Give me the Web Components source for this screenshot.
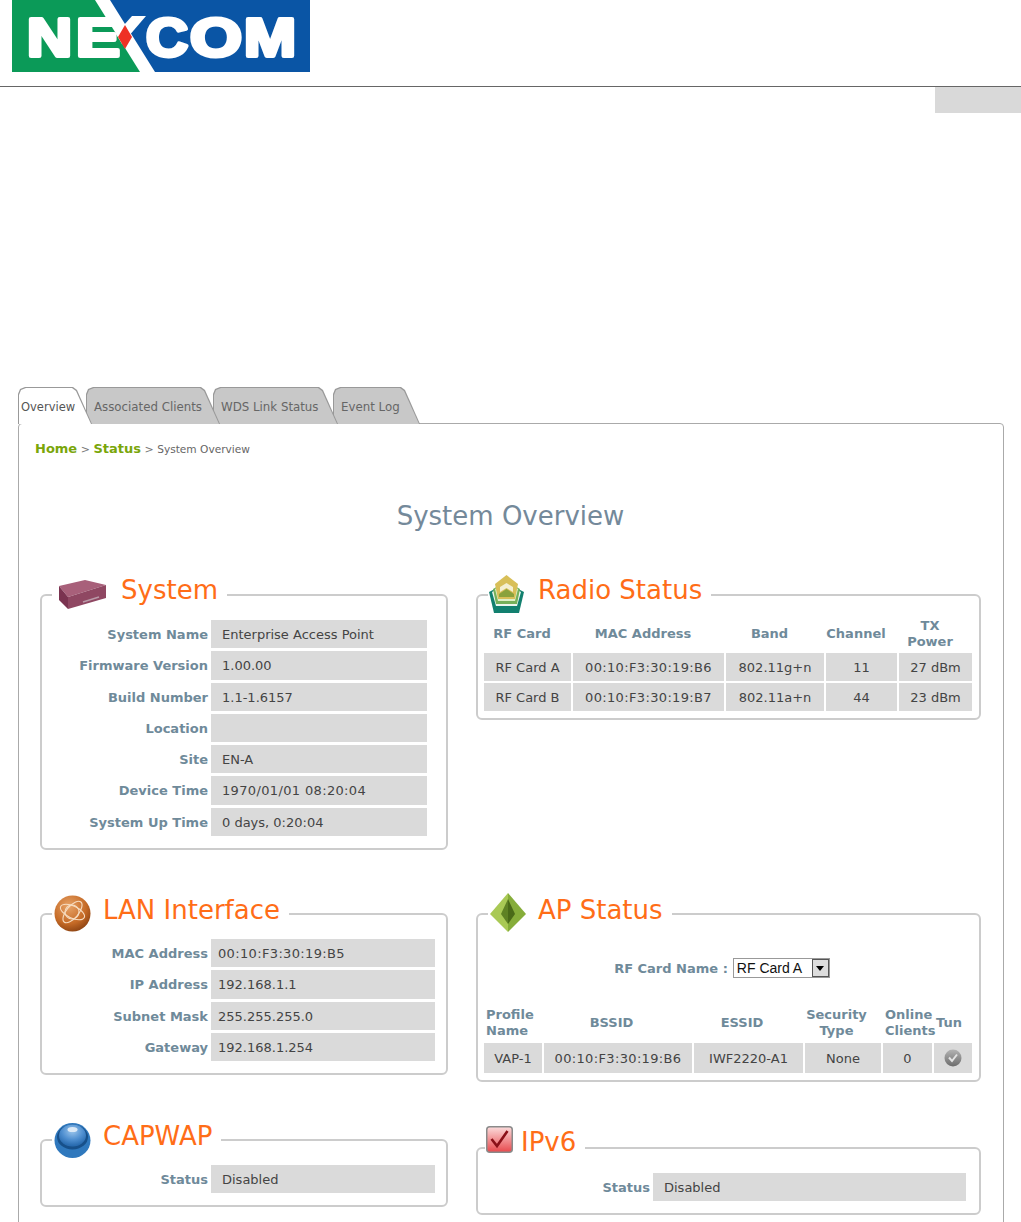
<!DOCTYPE html>
<html>
<head>
<meta charset="utf-8">
<title>System Overview</title>
<style>
html, body { margin: 0; padding: 0; background: #fff; overflow: hidden; height: 1222px; }
body { font-family: "DejaVu Sans", Verdana, sans-serif; }
nx-tabs { margin: 274px 0 -1px 18px; }
</style>
</head>
<body>

<nx-header></nx-header>

<nx-tabs>
  <nx-tab active style="width:74px;z-index:4">Overview</nx-tab>
  <nx-tab style="width:134px;margin-left:-6px;z-index:3">Associated Clients</nx-tab>
  <nx-tab style="width:125px;margin-left:-7px;z-index:2">WDS Link Status</nx-tab>
  <nx-tab style="width:87px;margin-left:-5px;z-index:1">Event Log</nx-tab>
</nx-tabs>

<nx-page>
  <nx-crumbs><a>Home</a> &gt; <a>Status</a> &gt; <small>System Overview</small></nx-crumbs>
  <nx-title>System Overview</nx-title>

  <nx-columns>
    <status-panel heading="System" style="--gap:13px;--ty:0px">
      <svg slot="icon" width="52" height="29" viewBox="0 0 52 29" style="margin:5px 0 0 4px">
        <path d="M3 6 L29 0 L50 5 L12 17Z" fill="#a8607a"/>
        <path d="M3 6 L12 17 L12 29 L3 20Z" fill="#7a3350"/>
        <path d="M12 17 L50 5 L50 18 L12 29Z" fill="#8f4762"/>
        <path d="M27 22 L43 17" stroke="#b99aa8" stroke-width="1.5"/>
      </svg>
      <kv-list style="--label-w:166px;--value-w:216px">
        <kv-row label="System Name">Enterprise Access Point</kv-row>
        <kv-row label="Firmware Version">1.00.00</kv-row>
        <kv-row label="Build Number">1.1-1.6157</kv-row>
        <kv-row label="Location"></kv-row>
        <kv-row label="Site">EN-A</kv-row>
        <kv-row label="Device Time" num>1970/01/01 08:20:04</kv-row>
        <kv-row label="System Up Time">0 days, 0:20:04</kv-row>
      </kv-list>
    </status-panel>

    <status-panel heading="Radio Status" style="--ty:0px;--pad-top:2px;--pad-bottom:7px">
      <svg slot="icon" width="38" height="39" viewBox="0 0 38 39" style="margin-top:0">
        <path d="M18.5 8 L36 17 L31 38 L6 38 L1 17Z" fill="#12806f"/>
        <path d="M18.5 9 L33 17 L29 31 L8 31 L4 17Z" fill="#eef6ee"/>
        <path d="M18.5 6 L32 14 L29 29 L8 29 L5 14Z" fill="#76b05a"/>
        <path d="M18.5 7 L30 14 L27 26 L10 26 L7 14Z" fill="#dff0c8"/>
        <path d="M18.5 0 L30 9 L27 24 L10 24 L7 9Z" fill="#d8bf58"/>
        <path d="M18.5 8 L25 12 L25 17 L18.5 13 L12 17 L12 12Z" fill="#f4efd0"/>
        <path d="M11 19 L18.5 14 L26 19 L26 22 L11 22Z" fill="#8aa23c"/>
      </svg>
      <data-table columns="87px 151px 98px 71px 73px" style="--head-h:34px;--cell-h:28px;--row-gap:2px;--head-shift:11px">
        <t-head>RF Card</t-head><t-head>MAC Address</t-head><t-head>Band</t-head><t-head>Channel</t-head><t-head>TX<br>Power</t-head>
        <t-cell>RF Card A</t-cell><t-cell num>00:10:F3:30:19:B6</t-cell><t-cell>802.11g+n</t-cell><t-cell>11</t-cell><t-cell>27 dBm</t-cell>
        <t-cell>RF Card B</t-cell><t-cell num>00:10:F3:30:19:B7</t-cell><t-cell>802.11a+n</t-cell><t-cell>44</t-cell><t-cell>23 dBm</t-cell>
      </data-table>
    </status-panel>

    <status-panel heading="LAN Interface">
      <svg slot="icon" width="37" height="37" viewBox="0 0 37 37" style="margin:1px 0 0 2px">
        <defs><radialGradient id="lanBall" cx=".4" cy=".3" r=".8"><stop offset="0" stop-color="#e8a468"/><stop offset=".6" stop-color="#c56a26"/><stop offset="1" stop-color="#7f3a0e"/></radialGradient></defs>
        <circle cx="18.5" cy="18.5" r="18" fill="url(#lanBall)"/>
        <g fill="none" stroke="#f6dcc0" stroke-width="1.1">
          <ellipse cx="18.5" cy="17" rx="13" ry="6" transform="rotate(25 18.5 17)"/>
          <ellipse cx="18.5" cy="17" rx="13" ry="6" transform="rotate(-50 18.5 17)"/>
          <circle cx="18" cy="17" r="7"/>
        </g>
      </svg>
      <kv-list style="--label-w:166px;--value-w:224px">
        <kv-row label="MAC Address" narrow num>00:10:F3:30:19:B5</kv-row>
        <kv-row label="IP Address" narrow>192.168.1.1</kv-row>
        <kv-row label="Subnet Mask" narrow>255.255.255.0</kv-row>
        <kv-row label="Gateway" narrow>192.168.1.254</kv-row>
      </kv-list>
    </status-panel>

    <status-panel heading="AP Status" style="--gap:11px;--pad-bottom:7px">
      <svg slot="icon" width="38" height="39" viewBox="0 0 38 39" style="margin:-1px 0 0 1px">
        <path d="M19 0 L37 21 L19 39Z" fill="#86ad3a"/>
        <path d="M19 0 L1 21 L19 39Z" fill="#a9c955"/>
        <path d="M19 6 L26 21 L19 31Z" fill="#4a6a18"/>
        <path d="M19 6 L12 21 L19 31Z" fill="#5f8224"/>
      </svg>
      <rf-picker>RF Card A</rf-picker>
      <data-table columns="58px 148px 109px 76px 49px 38px" style="--head-h:37px;--cell-h:30px;--row-gap:0px;--head-shift:13px;--head-pb:3px">
        <t-head left>Profile<br>Name</t-head><t-head>BSSID</t-head><t-head>ESSID</t-head><t-head>Security<br>Type</t-head><t-head left>Online<br>Clients</t-head><t-head left>Tun</t-head>
        <t-cell>VAP-1</t-cell><t-cell num>00:10:F3:30:19:B6</t-cell><t-cell>IWF2220-A1</t-cell><t-cell>None</t-cell><t-cell>0</t-cell>
        <t-cell>
          <svg width="18" height="18" viewBox="0 0 18 18">
            <defs><linearGradient id="tunBall" x1="0" y1="0" x2="0" y2="1"><stop offset="0" stop-color="#b4b4b4"/><stop offset="1" stop-color="#6c6c6c"/></linearGradient></defs>
            <circle cx="9" cy="9" r="8.5" fill="url(#tunBall)"/>
            <path d="M5 8.5 L8 12 L13 5.5" fill="none" stroke="#e4e4e4" stroke-width="2"/>
          </svg>
        </t-cell>
      </data-table>
    </status-panel>

    <status-panel heading="CAPWAP">
      <svg slot="icon" width="37" height="35" viewBox="0 0 37 35" style="margin:3px 0 0 2px">
        <defs><radialGradient id="capBall" cx=".5" cy=".3" r=".65"><stop offset="0" stop-color="#9cc6ec"/><stop offset=".6" stop-color="#4f8fd0"/><stop offset="1" stop-color="#2a6cb0"/></radialGradient></defs>
        <ellipse cx="18.5" cy="17.5" rx="18" ry="17.5" fill="#2f78bd"/>
        <ellipse cx="18.5" cy="14" rx="15.5" ry="12.5" fill="#17508a"/>
        <ellipse cx="18.5" cy="12.5" rx="13.5" ry="11" fill="url(#capBall)"/>
        <ellipse cx="18.5" cy="6.5" rx="5" ry="2.6" fill="#dbe9f6"/>
      </svg>
      <kv-list style="--label-w:166px;--value-w:224px">
        <kv-row label="Status">Disabled</kv-row>
      </kv-list>
    </status-panel>

    <status-panel heading="IPv6" style="margin-top:8px;--ty:-1px;--gap:8px;--legend-left:7px">
      <svg slot="icon" width="27" height="27" viewBox="0 0 27 27" style="margin:-2px 0 0 1px">
        <defs><linearGradient id="v6Box" x1="0" y1="0" x2="0" y2="1"><stop offset="0" stop-color="#fbdcdc"/><stop offset="1" stop-color="#e8484c"/></linearGradient></defs>
        <rect x=".75" y=".75" width="25.5" height="25.5" rx="3" fill="url(#v6Box)" stroke="#8a8a8a" stroke-width="1.5"/>
        <path d="M5.5 13 L11 20 L21.5 5" fill="none" stroke="#8a1018" stroke-width="2.6"/>
      </svg>
      <kv-list style="--label-w:172px;--value-w:313px">
        <kv-row label="Status">Disabled</kv-row>
      </kv-list>
    </status-panel>
  </nx-columns>
</nx-page>

<script>
function shadow(el, markup) {
  el.attachShadow({mode: "open"}).innerHTML = markup;
}

customElements.define("nx-header", class extends HTMLElement {
  constructor() {
    super();
    shadow(this, `
<style>
:host { display: block; }
.logo { display: block; margin-left: 12px; height: 72px; }
.rule { border-bottom: 1px solid #666; height: 14px; }
.tail { display: flex; justify-content: flex-end; }
.tail div { width: 86px; height: 26px; background: #d9d9d9; }
text { font-family: "Liberation Sans", Arial, sans-serif; font-weight: bold; fill: #fff; stroke: #fff; stroke-width: 4px; stroke-linejoin: round; font-size: 54px; }
</style>
<svg class="logo" width="298" height="72" viewBox="0 0 298 72">
  <rect width="298" height="72" fill="#0a55a5"/>
  <path d="M0 0 H86 L131 72 H0Z" fill="#0b9a58"/>
  <text x="15" y="56" textLength="45" lengthAdjust="spacingAndGlyphs">N</text>
  <text x="64" y="56" textLength="44" lengthAdjust="spacingAndGlyphs">E</text>
  <path d="M83 0 H98 L143 72 H128Z" fill="#fff"/>
  <path d="M120 16 H134 L110 44 L104 34Z" fill="#fff"/>
  <path d="M113 25 L120 37 L113 49 L106 37Z" fill="#ee3124"/>
  <text x="134" y="56" textLength="42" lengthAdjust="spacingAndGlyphs">C</text>
  <text x="178" y="56" textLength="52" lengthAdjust="spacingAndGlyphs">O</text>
  <text x="232" y="56" textLength="52" lengthAdjust="spacingAndGlyphs">M</text>
</svg>
<div class="rule"></div>
<div class="tail"><div></div></div>`);
  }
});

customElements.define("nx-tabs", class extends HTMLElement {
  constructor() {
    super();
    shadow(this, `
<style>
:host { display: flex; position: relative; z-index: 1; }
</style>
<slot></slot>`);
  }
});

customElements.define("nx-tab", class extends HTMLElement {
  constructor() {
    super();
    shadow(this, `
<style>
:host {
  display: block; position: relative; height: 37px; box-sizing: border-box;
  font-size: 11.8px; color: #666;
  --shape: polygon(0 7px, 2px 2px, 7px 0, calc(100% - 19px) 0, calc(100% - 15px) 3px, 100% 100%, 0 100%);
}
.edge { height: 100%; padding: 1px 1px 0 1px; box-sizing: border-box; background: #999; clip-path: var(--shape); }
.fill { height: 100%; background: #c8c8c8; clip-path: var(--shape); display: flex; align-items: center; padding-left: 7px; padding-top: 1px; box-sizing: border-box; white-space: nowrap; }
:host([active]) .fill { background: #fff; padding-left: 2px; }
:host([active]) { color: #555; font-size: 11.5px; }
</style>
<div class="edge"><div class="fill"><slot></slot></div></div>`);
  }
});

customElements.define("nx-page", class extends HTMLElement {
  constructor() {
    super();
    shadow(this, `
<style>
:host {
  display: block; margin-left: 18px; width: 986px; box-sizing: border-box;
  border: 1px solid #aaa; border-radius: 4px 4px 0 0; padding: 0 0 40px 21px;
}
</style>
<slot></slot>`);
  }
});

customElements.define("nx-crumbs", class extends HTMLElement {
  constructor() {
    super();
    shadow(this, `
<style>
:host { display: block; padding-top: 17px; height: 32px; line-height: 16px; margin-left: -5px; font-size: 11px; color: #777; box-sizing: border-box; white-space: nowrap; }
::slotted(a) { color: #7aa60a; font-weight: bold; font-size: 13px; }
::slotted(small) { font-size: 10.6px; color: #666; }
</style>
<slot></slot>`);
  }
});

customElements.define("nx-title", class extends HTMLElement {
  constructor() {
    super();
    shadow(this, `
<style>
:host { display: block; margin: 44px 0 43px -22px; height: 32px; line-height: 32px; text-align: center; font-size: 26px; color: #74899a; }
</style>
<slot></slot>`);
  }
});

customElements.define("nx-columns", class extends HTMLElement {
  constructor() {
    super();
    shadow(this, `
<style>
:host { display: grid; grid-template-columns: 408px 505px; grid-template-rows: 319px 226px auto; column-gap: 28px; align-items: start; }
</style>
<slot></slot>`);
  }
});

customElements.define("status-panel", class extends HTMLElement {
  constructor() {
    super();
    shadow(this, `
<style>
:host { display: block; }
fieldset { margin: 0; padding: var(--pad-top, 5px) 0 var(--pad-bottom, 12px) 0; border: 2px solid #ccc; border-radius: 6px; min-width: 0; }
legend {
  display: flex; height: 40px; padding: 0 9px 0 0; margin-left: var(--legend-left, 10px);
  background: #fff; box-sizing: border-box;
}
h2 {
  margin: var(--ty, 1px) 0 0 var(--gap, 12px); font: normal 26px/30px "DejaVu Sans", Verdana, sans-serif; color: #ff6d17; white-space: nowrap;
}
::slotted(svg) { flex: none; }
</style>
<fieldset>
  <legend><slot name="icon"></slot><h2></h2></legend>
  <slot></slot>
</fieldset>`);
  }
  connectedCallback() {
    this.shadowRoot.querySelector("h2").textContent = this.getAttribute("heading");
  }
});

customElements.define("kv-list", class extends HTMLElement {
  constructor() {
    super();
    shadow(this, `
<style>
:host { display: grid; grid-auto-rows: 28.3px; row-gap: 3px; }
</style>
<slot></slot>`);
  }
});

customElements.define("kv-row", class extends HTMLElement {
  constructor() {
    super();
    shadow(this, `
<style>
:host { display: grid; grid-template-columns: var(--label-w) var(--value-w); column-gap: 3px; font-size: 13px; line-height: 29px; }
.label { text-align: right; font-weight: bold; color: #6f8a9a; white-space: nowrap; }
.value { background: #dadada; color: #444; padding-left: 11px; white-space: nowrap; height: 28.3px; }
:host([narrow]) .value { padding-left: 7px; }
:host([num]) .value { letter-spacing: .35px; }
</style>
<div class="label"></div>
<div class="value"><slot></slot></div>`);
  }
  connectedCallback() {
    this.shadowRoot.querySelector(".label").textContent = this.getAttribute("label");
  }
});

customElements.define("data-table", class extends HTMLElement {
  constructor() {
    super();
    shadow(this, `
<style>
:host { display: grid; column-gap: 2px; row-gap: var(--row-gap); margin-left: 6px; font-size: 13px; }
</style>
<slot></slot>`);
  }
  connectedCallback() {
    this.style.gridTemplateColumns = this.getAttribute("columns");
  }
});

customElements.define("t-head", class extends HTMLElement {
  constructor() {
    super();
    shadow(this, `
<style>
:host { display: flex; align-items: center; justify-content: center; height: var(--head-h); box-sizing: border-box; padding-right: var(--head-shift, 0); padding-bottom: var(--head-pb, 0); text-align: center; font-weight: bold; color: #6f8a9a; line-height: 16px; white-space: nowrap; }
:host([left]) { justify-content: flex-start; text-align: left; padding-left: 2px; padding-right: 0; }
</style>
<div><slot></slot></div>`);
  }
});

customElements.define("t-cell", class extends HTMLElement {
  constructor() {
    super();
    shadow(this, `
<style>
:host { display: flex; align-items: center; justify-content: center; height: var(--cell-h); background: #dadada; color: #444; white-space: nowrap; }
:host([num]) { letter-spacing: .35px; }
</style>
<slot></slot>`);
  }
});

customElements.define("rf-picker", class extends HTMLElement {
  constructor() {
    super();
    shadow(this, `
<style>
:host { display: flex; align-items: center; justify-content: center; height: 67px; padding-bottom: 9px; box-sizing: border-box; margin-left: -13px; }
.name { font-weight: bold; font-size: 13px; color: #6f8a9a; margin-right: 5px; white-space: nowrap; }
.box { display: flex; width: 97px; height: 20px; box-sizing: border-box; border: 1px solid #999; background: #fff; font: 14px/18px "Liberation Sans", Arial, sans-serif; color: #111; padding-left: 3px; justify-content: space-between; white-space: nowrap; }
.btn { width: 17px; height: 18px; box-sizing: border-box; background: #ddd; border: 1px solid #555; display: flex; align-items: center; justify-content: center; }
.btn i { border: 4px solid transparent; border-top: 5px solid #000; border-bottom: 0; }
</style>
<span class="name">RF Card Name :</span>
<div class="box"><slot></slot><div class="btn"><i></i></div></div>`);
  }
});
</script>
</body>
</html>
